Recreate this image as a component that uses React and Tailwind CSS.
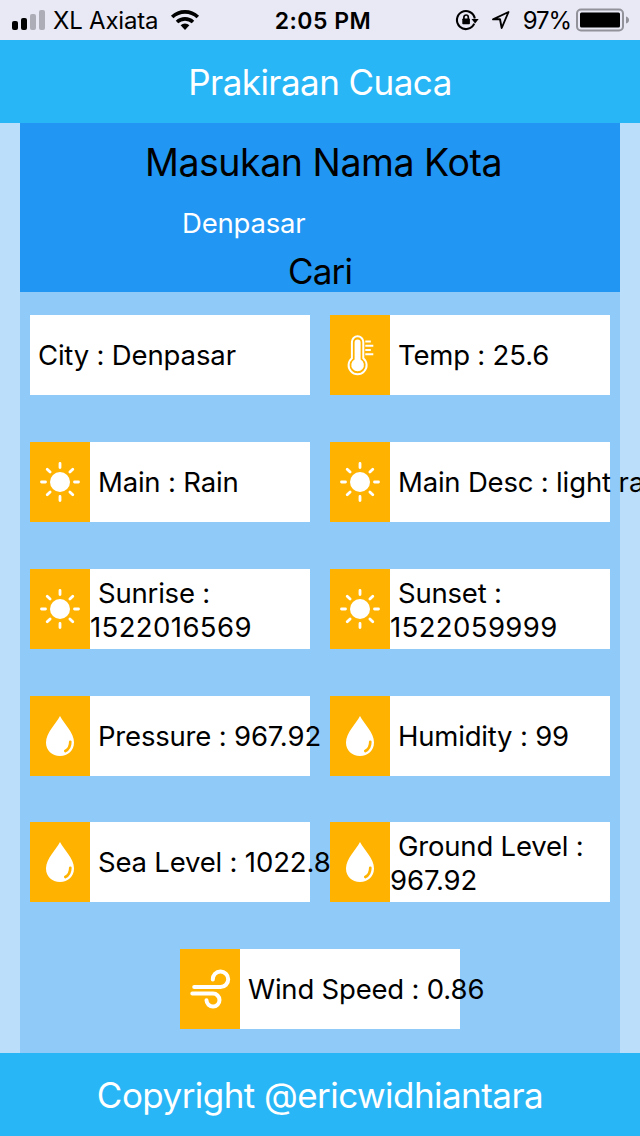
import React from 'react';

function Sun() {
  return (
    <svg viewBox="0 0 60 80" className="h-20 w-[60px]" fill="none" stroke="#fff" strokeWidth="2.8" strokeLinecap="round">
      <circle cx="30" cy="40" r="10" fill="#fff" stroke="none" />
      <path d="M30 21.500v4M30 54.500v4M11.500 40h4M44.500 40h4M17.200 27.200l2.900 2.900M39.900 49.900l2.900 2.900M42.800 27.200l-2.900 2.900M20.100 49.900l-2.900 2.900" />
    </svg>
  );
}

function Drop() {
  return (
    <svg viewBox="0 0 60 80" className="h-20 w-[60px]">
      <path d="M30 20C26 28 16 36.500 16 46.500C16 54.500 22 60 30 60S44 54.500 44 46.500C44 36.500 34 28 30 20Z" fill="#fff" />
      <path d="M40.300 45.800C40.300 50.500 38.500 53.500 35.300 55" fill="none" stroke="#ffb300" strokeWidth="2.7" strokeLinecap="round" />
    </svg>
  );
}

function Thermometer() {
  return (
    <svg viewBox="0 0 60 80" className="h-20 w-[60px]" fill="none" stroke="#fff">
      <path d="M21.900 43.200V27a5.700 5.700 0 0 1 11.400 0V43.200a9 9 0 1 1-11.400 0Z" strokeWidth="2" />
      <path d="M24.600 27.500a3 3 0 0 1 6 0V44.400a6.300 6.300 0 1 1-6 0Z" fill="#fff" stroke="none" />
      <path d="M35.300 26.500h5.500M35.300 30.700h8M35.300 35h5.500M35.300 39.300h8" strokeWidth="2" />
    </svg>
  );
}

function Wind() {
  return (
    <svg viewBox="0 0 60 80" className="h-20 w-[60px]" fill="none" stroke="#fff" strokeWidth="4" strokeLinecap="round">
      <path d="M14.200 38H40.500a7.700 7.700 0 1 0-7.700-7.500M12.300 44.600H33a6.500 6.500 0 1 1-6.500 6.700" />
    </svg>
  );
}

function Card({ icon: Icon, label, value, wrap }) {
  return (
    <div className="relative mb-[0.4px] flex h-20 w-[280px] items-center bg-white">
      {Icon && (
        <div className="h-20 w-[60px] shrink-0 bg-[#ffb300]">
          <Icon />
        </div>
      )}
      <p className={`whitespace-nowrap text-[27.5px] leading-[34px] tracking-[-0.2px] ${wrap ? 'pt-0.5' : ''}`}>
        <span className="pl-2">{label} :</span>
        {wrap ? <br /> : ' '}
        <span className={value.length > 9 && wrap ? 'tracking-[0.4px]' : 'tracking-[-0.1px]'}>{value}</span>
      </p>
    </div>
  );
}

function Row({ children }) {
  return <div className="flex flex-1 items-center justify-center gap-5">{children}</div>;
}

function StatusBar() {
  return (
    <div className="grid h-10 shrink-0 grid-cols-[1fr_auto_1fr] items-center bg-[#e9e9f6] text-[24px]">
      <div className="flex items-center pl-3">
        <svg width="34" height="24" viewBox="0 0 34 24">
          <rect x="0" y="13" width="6" height="9" rx="2" />
          <rect x="9" y="10" width="6" height="12" rx="2" />
          <rect x="18" y="6" width="6" height="16" rx="2" fill="#adadb7" />
          <rect x="27" y="2" width="6" height="20" rx="2" fill="#adadb7" />
        </svg>
        <span className="ml-[7px] pt-px tracking-[-0.2px]">XL Axiata</span>
        <svg className="ml-3" width="30" height="22" viewBox="0 0 30 22" fill="none" stroke="#000" strokeWidth="3.600">
          <path d="M2.200 8a18.500 18.500 0 0 1 25.600 0M7 13a11.700 11.700 0 0 1 16 0" />
          <path d="M10.600 16.200a6.500 6.500 0 0 1 8.800 0L15 21Z" fill="#000" stroke="none" />
        </svg>
      </div>
      <span className="pl-1.5 pt-[2px] text-[23px] font-semibold tracking-[0.5px]">2:05 PM</span>
      <div className="flex items-center justify-end pr-2.5">
        <svg width="24" height="24" viewBox="0 0 24 24" fill="none" stroke="#000" strokeWidth="2.100">
          <path d="M19.200 15.600A9 9 0 1 1 19.800 10.500" />
          <path d="M16.500 11h7.200l-3.600 4.500Z" fill="#000" stroke="none" />
          <rect x="7.300" y="10.500" width="7.600" height="5.800" rx=".8" fill="#000" stroke="none" />
          <path d="M8.900 11V9.200a2.200 2.200 0 0 1 4.400 0V11" strokeWidth="1.700" />
        </svg>
        <svg className="ml-3" width="20" height="22" viewBox="0 0 20 22" fill="none" stroke="#000" strokeWidth="1.900">
          <path d="M17.500 3L2 10.300H9L10.700 19Z" strokeLinejoin="round" />
        </svg>
        <span className="ml-3 pt-px tracking-[-1.1px]">97%</span>
        <svg className="ml-[5px]" width="54" height="24" viewBox="0 0 54 24">
          <rect x="1" y="1.500" width="46" height="21" rx="4" fill="none" stroke="#92929a" strokeWidth="2" />
          <rect x="4" y="4.500" width="40" height="15" rx="1.500" />
          <path d="M50 8.500q3 1 3 3.500t-3 3.500Z" fill="#92929a" />
        </svg>
      </div>
    </div>
  );
}

export default function App() {
  return (
    <div className="flex h-[1136px] w-[640px] flex-col overflow-hidden bg-[#bbdefb] font-[Inter,sans-serif] text-black">
      <StatusBar />
      <header className="flex h-[83px] shrink-0 items-center justify-center bg-[#29b6f6] pt-px text-[35px] tracking-[-0.55px] text-white">
        <h1>Prakiraan Cuaca</h1>
      </header>
      <main className="mx-5 flex flex-1 flex-col bg-[#90caf9]">
        <section className="flex h-[169px] flex-col bg-[#2196f3]">
          <h2 className="mt-[17px] pl-[7px] text-center text-[37.5px] leading-[46px] tracking-[-0.45px]">Masukan Nama Kota</h2>
          <p className="ml-[162px] mt-5 text-[27.5px] leading-[34px] tracking-[-0.2px] text-white">Denpasar</p>
          <p className="mt-2.5 text-center text-[35px] leading-[42px] tracking-[-0.8px]">Cari</p>
        </section>
        <section className="flex flex-1 flex-col pb-[0.2px]">
          <Row>
            <Card label="City" value="Denpasar" />
            <Card icon={Thermometer} label="Temp" value="25.6" />
          </Row>
          <Row>
            <Card icon={Sun} label="Main" value="Rain" />
            <Card icon={Sun} label="Main Desc" value="light rain" />
          </Row>
          <Row>
            <Card icon={Sun} label="Sunrise" value="1522016569" wrap />
            <Card icon={Sun} label="Sunset" value="1522059999" wrap />
          </Row>
          <Row>
            <Card icon={Drop} label="Pressure" value="967.92" />
            <Card icon={Drop} label="Humidity" value="99" />
          </Row>
          <Row>
            <Card icon={Drop} label="Sea Level" value="1022.8" />
            <Card icon={Drop} label="Ground Level" value="967.92" wrap />
          </Row>
          <Row>
            <Card icon={Wind} label="Wind Speed" value="0.86" />
          </Row>
        </section>
      </main>
      <footer className="flex h-[83px] shrink-0 items-center justify-center bg-[#29b6f6] pt-0.5 text-[35px] tracking-[-0.55px] text-white">
        Copyright @ericwidhiantara
      </footer>
    </div>
  );
}
